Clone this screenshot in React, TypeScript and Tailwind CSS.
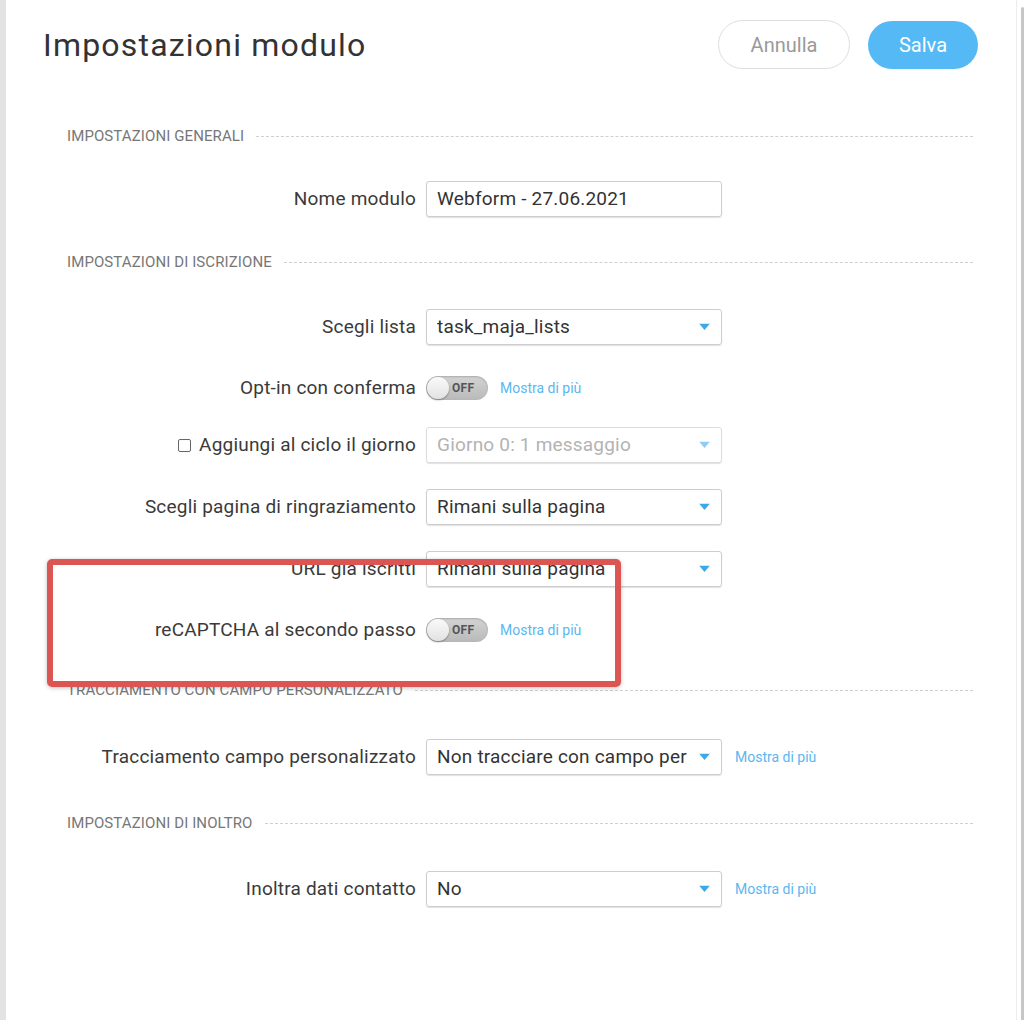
import React from "react";

const font = { fontFamily: "Roboto, 'Liberation Sans', sans-serif" };

function SectionTitle({ title, className = "" }: { title: string; className?: string }) {
  return (
    <div className={`flex items-center h-[20px] pl-[61px] pr-[43px] ${className}`}>
      <span className="text-[15px] tracking-[0.1px] text-[#777] uppercase whitespace-nowrap">{title}</span>
      <div className="flex-1 ml-[12px] border-t border-dashed border-[#cfcfcf]" />
    </div>
  );
}

function Row({ label, children, className = "" }: { label: React.ReactNode; children: React.ReactNode; className?: string }) {
  return (
    <div className={`flex items-center h-[36px] ${className}`}>
      <div className="w-[410px] text-right text-[19px] tracking-[0.2px] text-[#3a3a3a] whitespace-nowrap flex items-center justify-end pt-[1px]">
        {label}
      </div>
      <div className="ml-[10px] flex items-center">{children}</div>
    </div>
  );
}

function Caret({ muted = false }: { muted?: boolean }) {
  return (
    <svg width="11" height="7" viewBox="0 0 11 7" className="absolute right-[11px] top-1/2 -translate-y-1/2">
      <path d="M0 0 L11 0 L5.5 6.5 Z" fill={muted ? "#8fcdf4" : "#3ea7ec"} />
    </svg>
  );
}

function Select({ value, muted = false }: { value: string; muted?: boolean }) {
  return (
    <div
      className={`relative w-[296px] h-[36px] rounded-[3px] border shadow-[0_1px_1px_rgba(0,0,0,0.12)] flex items-center pl-[10px] pr-[34px] text-[19px] tracking-[0.2px] ${
        muted ? "text-[#b3b3b3] border-[#dcdcdc]" : "text-[#333] border-[#cdcdcd]"
      }`}
    >
      <span className="flex-1 min-w-0 overflow-hidden whitespace-nowrap">{value}</span>
      <Caret muted={muted} />
    </div>
  );
}

function Toggle() {
  return (
    <div className="relative w-[62px] h-[24px] rounded-full bg-gradient-to-b from-[#d4d4d4] to-[#b9b9b9] shadow-[inset_0_1px_2px_rgba(0,0,0,0.2)] flex items-center">
      <div className="absolute left-[1px] top-[1px] w-[22px] h-[22px] rounded-full bg-gradient-to-b from-[#fafafa] to-[#e2e2e2] shadow-[0_1px_2px_rgba(0,0,0,0.35)]" />
      <span className="ml-[26px] text-[12px] font-bold text-[#555] tracking-[0.3px]">OFF</span>
    </div>
  );
}

function More({ className = "" }: { className?: string }) {
  return <span className={`text-[14px] text-[#5bb7ef] whitespace-nowrap ${className}`}>Mostra di più</span>;
}

export default function App() {
  return (
    <div className="w-[1024px] h-[1020px] flex bg-white overflow-hidden" style={font}>
      {/* left edge */}
      <div className="w-[6px] h-full bg-[#e3e3e3]" />

      {/* panel */}
      <div className="relative flex-1 h-full bg-white">
        {/* header */}
        <div className="flex items-center justify-between pt-[20px] pl-[37px] pr-[38px]">
          <h1 className="text-[32px] text-[#333] tracking-[1.2px] leading-none">Impostazioni modulo</h1>
          <div className="flex items-center gap-[18px]">
            <button className="w-[132px] h-[49px] rounded-full border border-[#dedede] text-[20px] text-[#999] bg-white">
              Annulla
            </button>
            <button className="w-[110px] h-[48px] rounded-full bg-[#55b9f6] text-[20px] text-white">Salva</button>
          </div>
        </div>

        <SectionTitle title="Impostazioni generali" className="mt-[57px]" />
        <Row label="Nome modulo" className="mt-[35px]">
          <div className="w-[296px] h-[36px] rounded-[3px] border border-[#cdcdcd] shadow-[0_1px_1px_rgba(0,0,0,0.12)] flex items-center pl-[10px] text-[19px] tracking-[0.2px] text-[#333]">
            Webform - 27.06.2021
          </div>
        </Row>

        <SectionTitle title="Impostazioni di iscrizione" className="mt-[35px]" />
        <Row label="Scegli lista" className="mt-[37px]">
          <Select value="task_maja_lists" />
        </Row>
        <Row label="Opt-in con conferma" className="mt-[25px]">
          <Toggle />
          <More className="ml-[12px]" />
        </Row>
        <Row
          label={
            <>
              <span className="inline-block w-[13px] h-[13px] rounded-[2px] border border-[#666] mr-[8px]" />
              Aggiungi al ciclo il giorno
            </>
          }
          className="mt-[21px]"
        >
          <Select value="Giorno 0: 1 messaggio" muted />
        </Row>
        <Row label="Scegli pagina di ringraziamento" className="mt-[26px]">
          <Select value="Rimani sulla pagina" />
        </Row>
        <Row label="URL già iscritti" className="mt-[26px]">
          <Select value="Rimani sulla pagina" />
        </Row>
        <Row label="reCAPTCHA al secondo passo" className="mt-[25px]">
          <Toggle />
          <More className="ml-[12px]" />
        </Row>

        <SectionTitle title="Tracciamento con campo personalizzato" className="mt-[32px]" />
        <Row label="Tracciamento campo personalizzato" className="mt-[39px]">
          <Select value="Non tracciare con campo personalizzato" />
          <More className="ml-[13px]" />
        </Row>

        <SectionTitle title="Impostazioni di inoltro" className="mt-[38px]" />
        <Row label="Inoltra dati contatto" className="mt-[38px]">
          <Select value="No" />
          <More className="ml-[13px]" />
        </Row>

        {/* annotation highlight */}
        <div className="absolute left-[41px] top-[559px] w-[574px] h-[128px] rounded-[5px] border-[6px] border-[#db5553] shadow-[0_1px_4px_rgba(0,0,0,0.25)]" />
      </div>

      {/* right edge */}
      <div className="w-[8px] h-full flex bg-white">
        <div className="w-[1px] h-full bg-[#ececec]" />
        <div className="w-[4px]" />
        <div className="w-[3px] h-full mt-[7px] rounded-t-[2px] bg-[#c6c6c6]" />
      </div>
    </div>
  );
}
